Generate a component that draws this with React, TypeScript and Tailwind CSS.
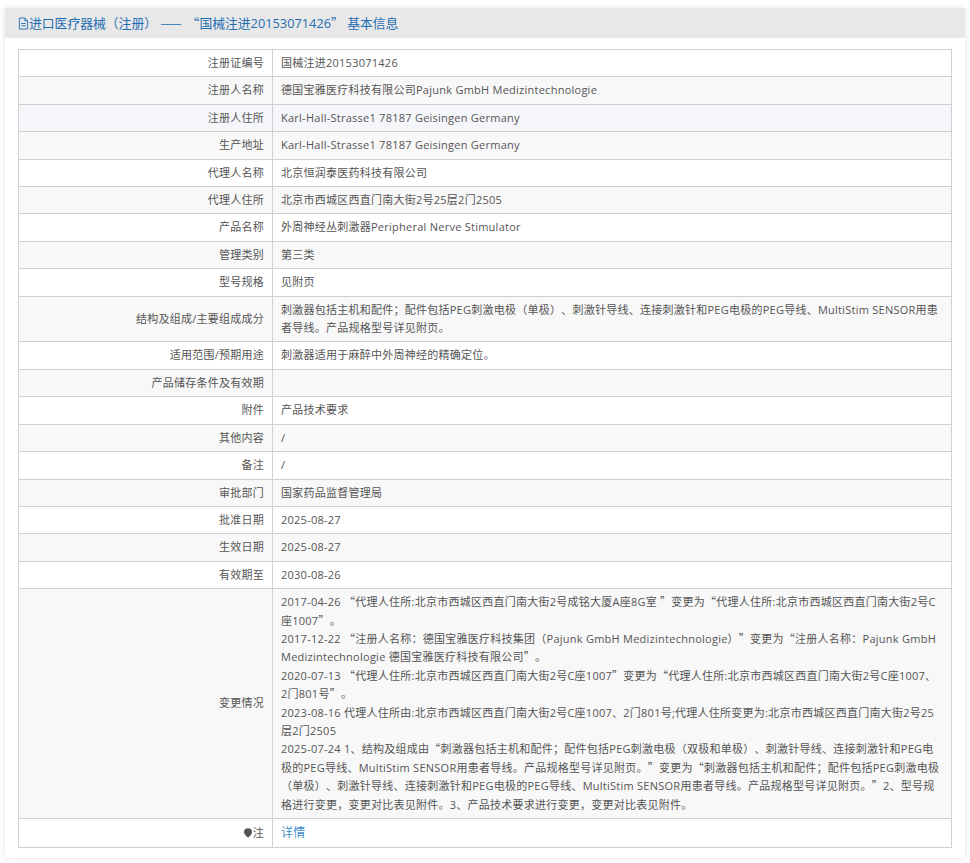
import React from "react";

const data: [string, string, string?][] = [
  ["注册证编号", "国械注进20153071426"],
  ["注册人名称", "德国宝雅医疗科技有限公司Pajunk GmbH Medizintechnologie"],
  ["注册人住所", "Karl-Hall-Strasse1 78187 Geisingen Germany", "bg-[#f5f6fa]"],
  ["生产地址", "Karl-Hall-Strasse1 78187 Geisingen Germany"],
  ["代理人名称", "北京恒润泰医药科技有限公司"],
  ["代理人住所", "北京市西城区西直门南大街2号25层2门2505"],
  ["产品名称", "外周神经丛刺激器Peripheral Nerve Stimulator"],
  ["管理类别", "第三类"],
  ["型号规格", "见附页"],
  ["结构及组成/主要组成成分", "刺激器包括主机和配件；配件包括PEG刺激电极（单极）、刺激针导线、连接刺激针和PEG电极的PEG导线、MultiStim SENSOR用患者导线。产品规格型号详见附页。"],
  ["适用范围/预期用途", "刺激器适用于麻醉中外周神经的精确定位。"],
  ["产品储存条件及有效期", ""],
  ["附件", "产品技术要求"],
  ["其他内容", "/"],
  ["备注", "/"],
  ["审批部门", "国家药品监督管理局"],
  ["批准日期", "2025-08-27"],
  ["生效日期", "2025-08-27"],
  ["有效期至", "2030-08-26"],
];

const changes = [
  "2017-04-26 “代理人住所:北京市西城区西直门南大街2号成铭大厦A座8G室 ”变更为“代理人住所:北京市西城区西直门南大街2号C座1007”。",
  "2017-12-22 “注册人名称：德国宝雅医疗科技集团（Pajunk GmbH Medizintechnologie）”变更为“注册人名称：Pajunk GmbH Medizintechnologie 德国宝雅医疗科技有限公司”。",
  "2020-07-13 “代理人住所:北京市西城区西直门南大街2号C座1007”变更为“代理人住所:北京市西城区西直门南大街2号C座1007、2门801号”。",
  "2023-08-16 代理人住所由:北京市西城区西直门南大街2号C座1007、2门801号;代理人住所变更为:北京市西城区西直门南大街2号25层2门2505",
  "2025-07-24 1、结构及组成由“刺激器包括主机和配件；配件包括PEG刺激电极（双极和单极）、刺激针导线、连接刺激针和PEG电极的PEG导线、MultiStim SENSOR用患者导线。产品规格型号详见附页。”变更为“刺激器包括主机和配件；配件包括PEG刺激电极（单极）、刺激针导线、连接刺激针和PEG电极的PEG导线、MultiStim SENSOR用患者导线。产品规格型号详见附页。”2、型号规格进行变更，变更对比表见附件。3、产品技术要求进行变更，变更对比表见附件。",
];

// quotes come from the CJK font so they sit full width
function Cjk({ text }: { text: string }) {
  return (
    <>
      {text.split(/([“”]+)/).map((part, i) =>
        i % 2 === 1 ? (
          <span key={i} className="font-['Noto_Sans_CJK_SC',sans-serif] leading-[0]">
            {part}
          </span>
        ) : (
          part
        ),
      )}
    </>
  );
}

function Row({ label, children, bg, className = "" }: { label: React.ReactNode; children: React.ReactNode; bg: string; className?: string }) {
  return (
    <div className={`flex border-b border-[#d0d0d0] ${bg} ${className}`}>
      <div className="flex w-[254px] shrink-0 items-center justify-end border-r border-[#d0d0d0] py-1 pr-2">{label}</div>
      <div className="flex min-w-0 flex-1 flex-col justify-center py-1 pr-[10px] pl-2">{children}</div>
    </div>
  );
}

export default function App() {
  return (
    <div className="h-[863px] overflow-hidden bg-white px-[5px] pt-2 font-['Open_Sans','Noto_Sans_CJK_SC',sans-serif] text-[11px] leading-[18.4px] tracking-[0.25px] text-[#555] [text-spacing-trim:space-all]">
      <div className="h-[850px] bg-white shadow-[0_0_6px_rgba(0,0,0,0.12)]">
        <div className="flex h-[30px] items-center bg-[#e8e8e8] pl-[13px] text-[12.8px] tracking-normal text-[#1f6fb2]">
          <svg viewBox="0 0 12 14" className="h-[13px] w-[11px] fill-none stroke-[#1f6fb2]">
            <path d="M1.5 1h6l3 3v9h-9zM7.5 1v3h3M3.5 7h5M3.5 9.5h5" />
          </svg>
          <span>
            进口医疗器械（注册）{" "}
            <span className="font-['Noto_Sans_CJK_SC',sans-serif] leading-[0] tracking-[1.5px]">——</span>{" "}
            <Cjk text="“国械注进20153071426” 基本信息" />
          </span>
        </div>
        <div className="mx-[13px] mt-[11px] border border-b-0 border-[#d0d0d0]">
          {data.map(([label, value, bg], i) => (
            <Row key={label} label={label} bg={bg ?? (i % 2 === 0 ? "bg-white" : "bg-[#f8f8f8]")}>
              <div className="min-h-[18.4px]">{value}</div>
            </Row>
          ))}
          <Row label="变更情况" bg="bg-[#f8f8f8]">
            {changes.map((c) => (
              <div key={c}>
                <Cjk text={c} />
              </div>
            ))}
          </Row>
          <Row
            label={
              <span className="flex items-center gap-px">
                <svg viewBox="0 0 10 12" className="h-[10px] w-[8px] fill-[#555]">
                  <path d="M5 0a5 5 0 0 1 5 5c0 2.5-3 5-5 7C3 10 0 7.5 0 5a5 5 0 0 1 5-5z" />
                </svg>
                注
              </span>
            }
            bg="bg-white"
            className="h-[29px]"
          >
            <span className="text-[12px] text-[#428bca]">详情</span>
          </Row>
        </div>
      </div>
    </div>
  );
}
